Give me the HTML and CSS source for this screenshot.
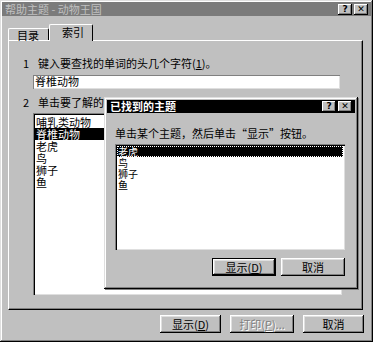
FILE: index.html
```html
<!DOCTYPE html>
<html>
<head>
	<meta charset="utf-8">
	<title>帮助主题</title>
	<link rel="stylesheet" href="styles.css">
</head>
<body>
<div class="window">

	<div class="titlebar inactive">
		<span class="title">帮助主题 - 动物王国</span>
		<span class="caption-btn">?</span>
		<span class="caption-btn close">✕</span>
	</div>

	<div class="tabs">
		<div class="tab">目录</div>
		<div class="tab selected">索引</div>
	</div>

	<div class="panel">
		<div class="step"><span class="num">1</span>键入要查找的单词的头几个字符(<u>1</u>)。</div>
		<div class="field">脊椎动物</div>
		<div class="step"><span class="num">2</span>单击要了解的索引项，然后单击“显示”(<u>2</u>)。</div>
		<ul class="list index-list">
			<li>哺乳类动物</li>
			<li class="selected">脊椎动物</li>
			<li>老虎</li>
			<li>鸟</li>
			<li>狮子</li>
			<li>鱼</li>
		</ul>
	</div>

	<div class="buttons">
		<div class="btn">显示(<u>D</u>)</div>
		<div class="btn disabled wide">打印(<u>P</u>)...</div>
		<div class="btn">取消</div>
	</div>

	<!-- popup dialog over the index tab -->
	<div class="dialog">
		<div class="titlebar">
			<span class="title">已找到的主题</span>
			<span class="caption-btn">?</span>
			<span class="caption-btn close">✕</span>
		</div>
		<p class="hint">单击某个主题，然后单击“显示”按钮。</p>
		<ul class="list topic-list">
			<li class="selected focus">老虎</li>
			<li>鸟</li>
			<li>狮子</li>
			<li>鱼</li>
		</ul>
		<div class="dialog-buttons">
			<div class="btn default">显示(<u>D</u>)</div>
			<div class="btn">取消</div>
		</div>
	</div>

</div>
</body>
</html>
```

FILE: styles.css
```css
/* Reset */

* { margin: 0; padding: 0; box-sizing: border-box; }

body {
	background: #c0c0c0;
	font-family: "Noto Sans CJK SC", "DejaVu Sans", sans-serif;
	font-size: 11px;
	color: #000;
}

ul { list-style: none; }


/* Window */

.window {
	position: relative;
	width: 373px;
	height: 342px;
	padding: 2px;
	background: #c0c0c0;
	box-shadow: inset -1px -1px #000, inset 1px 1px #dfdfdf,
		inset -2px -2px #808080, inset 2px 2px #fff;
}

.titlebar {
	display: flex;
	align-items: center;
	height: 14px;
	padding: 0 3px 0 3px;
	background: #000;
	color: #fff;
	font-weight: bold;
	line-height: 14px;
}

.titlebar.inactive {
	background: #7b7b7b;
	color: #c0c0c0;
	font-weight: normal;
}

.titlebar .title {
	flex: 1;
	white-space: nowrap;
}

.caption-btn {
	width: 14px;
	height: 11px;
	margin-left: 1px;
	background: #c0c0c0;
	color: #000;
	font-family: "DejaVu Sans", sans-serif;
	font-size: 9px;
	font-weight: bold;
	line-height: 11px;
	text-align: center;
	box-shadow: inset -1px -1px #000, inset 1px 1px #fff, inset -2px -2px #808080;
}

.caption-btn.close {
	margin-left: 2px;
}


/* Tabs */

.tabs {
	display: flex;
	align-items: flex-end;
	height: 16px;
	margin-top: 8px;
	padding-left: 6px;
}

.tab {
	position: relative;
	width: 41px;
	height: 12px;
	padding-left: 8px;
	line-height: 12px;
	border-top: 1px solid #fff;
	border-left: 1px solid #fff;
	border-right: 1px solid #000;
	border-radius: 2px 2px 0 0;
}

.tab.selected {
	width: 44px;
	height: 17px;
	margin-bottom: -1px;
	padding-left: 12px;
	line-height: 15px;
	background: #c0c0c0;
	z-index: 1;
}


/* Index panel */

.panel {
	width: 355px;
	height: 270px;
	margin-left: 6px;
	border-top: 1px solid #fff;
	border-left: 1px solid #fff;
	border-right: 1px solid #000;
	border-bottom: 1px solid #000;
	box-shadow: inset -1px -1px #808080;
	padding-top: 15px;
}

.step {
	padding-left: 14px;
	line-height: 14px;
	white-space: nowrap;
}

.step .num {
	display: inline-block;
	width: 15px;
}

.field {
	width: 307px;
	height: 14px;
	margin: 5px 0 6px 24px;
	padding-left: 2px;
	background: #fff;
	line-height: 13px;
	box-shadow: inset 1px 1px #808080, inset -1px -1px #dfdfdf;
}

.list {
	background: #fff;
	box-shadow: inset 1px 1px #808080, inset 2px 2px #000, inset -1px -1px #dfdfdf;
	padding: 2px;
}

.list li {
	height: 11px;
	padding-left: 1px;
	line-height: 11px;
	white-space: nowrap;
}

.list li.selected {
	background: #000;
	color: #fff;
}

.list li.focus {
	outline: 1px dotted #fff;
	outline-offset: -1px;
}

.index-list {
	width: 309px;
	height: 182px;
	margin: 4px 0 0 24px;
	padding-top: 3px;
}

.index-list li {
	height: 12px;
	line-height: 12px;
}


/* Buttons */

.buttons {
	display: flex;
	justify-content: flex-end;
	gap: 9px;
	margin-top: 5px;
	padding-right: 7px;
}

.btn {
	width: 61px;
	height: 18px;
	line-height: 18px;
	text-align: center;
	white-space: nowrap;
	background: #c0c0c0;
	box-shadow: inset -1px -1px #000, inset 1px 1px #fff,
		inset -2px -2px #808080, inset 2px 2px #dfdfdf;
}

.btn.wide {
	width: 64px;
}

.btn.disabled {
	color: #808080;
	text-shadow: 1px 1px #fff;
}

.btn.default {
	border: 1px solid #000;
	line-height: 16px;
}


/* Found topics dialog */

.dialog {
	position: absolute;
	left: 104px;
	top: 97px;
	width: 254px;
	height: 192px;
	padding: 3px;
	background: #c0c0c0;
	box-shadow: inset -1px -1px #000, inset 1px 1px #dfdfdf,
		inset -2px -2px #808080, inset 2px 2px #fff, 1px 1px #808080;
}

.dialog .titlebar {
	height: 13px;
	line-height: 13px;
}

.hint {
	margin: 13px 0 0 8px;
	line-height: 14px;
}

.topic-list {
	width: 230px;
	height: 106px;
	margin: 4px 0 0 8px;
}

.topic-list li {
	height: 11px;
	font-size: 10px;
	line-height: 11px;
}

.dialog-buttons {
	display: flex;
	justify-content: flex-end;
	gap: 5px;
	margin-top: 8px;
	padding-right: 10px;
}

.dialog-buttons .btn {
	width: 64px;
}
```
